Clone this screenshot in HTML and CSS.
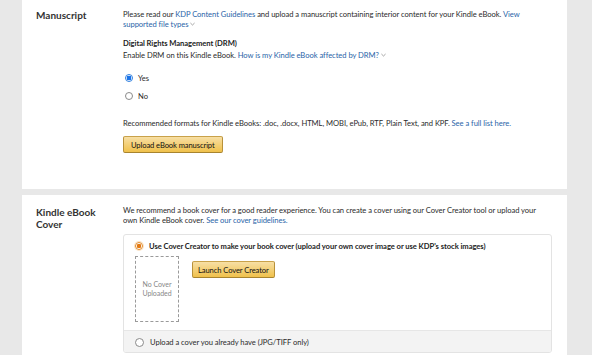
FILE: index.html
```html
<!DOCTYPE html>
<html>
<head>
<meta charset="utf-8">
<link rel="stylesheet" href="styles.css">
</head>
<body>
<div class="page">
  <section class="card card-top">
    <h2 class="label">Manuscript</h2>
    <div class="content">
      <p class="text">Please read our <a class="link">KDP Content Guidelines</a> and upload a manuscript containing interior content for your Kindle eBook. <a class="link">View supported file types</a> <svg class="chev" viewBox="0 0 6 4" width="5" height="4"><path d="M0.5 0.8 L3 3.2 L5.5 0.8" fill="none" stroke="#777" stroke-width="0.8"/></svg></p>
      <h3 class="subhead">Digital Rights Management (DRM)</h3>
      <p class="text">Enable DRM on this Kindle eBook. <a class="link">How is my Kindle eBook affected by DRM?</a> <svg class="chev" viewBox="0 0 6 4" width="5" height="4"><path d="M0.5 0.8 L3 3.2 L5.5 0.8" fill="none" stroke="#777" stroke-width="0.8"/></svg></p>
      <div class="radios">
        <label class="radio-row"><span class="radio radio-blue"></span>Yes</label>
        <label class="radio-row"><span class="radio"></span>No</label>
      </div>
      <p class="text formats">Recommended formats for Kindle eBooks: .doc, .docx, HTML, MOBI, ePub, RTF, Plain Text, and KPF. <a class="link">See a full list here.</a></p>
      <button class="btn">Upload eBook manuscript</button>
    </div>
  </section>
  <section class="card card-cover">
    <h2 class="label">Kindle eBook Cover</h2>
    <div class="content">
      <p class="text">We recommend a book cover for a good reader experience. You can create a cover using our Cover Creator tool or upload your own Kindle eBook cover. <a class="link">See our cover guidelines.</a></p>
      <div class="box">
        <div class="box-main">
          <label class="radio-row bold"><span class="radio radio-orange"></span>Use Cover Creator to make your book cover (upload your own cover image or use KDP's stock images)</label>
          <div class="creator">
            <div class="placeholder">No Cover Uploaded</div>
            <button class="btn btn-launch">Launch Cover Creator</button>
          </div>
        </div>
        <div class="box-alt">
          <label class="radio-row"><span class="radio radio-lg"></span>Upload a cover you already have (JPG/TIFF only)</label>
        </div>
      </div>
    </div>
  </section>
</div>
</body>
</html>
```

FILE: styles.css
```css
* { box-sizing: border-box; }
html, body {
  margin: 0;
  padding: 0;
  background: #e8e8e8;
  font-family: Lato, "Open Sans", sans-serif;
  color: #222;
}
.page {
  width: 592px;
  padding-left: 22px;
  display: flex;
  flex-direction: column;
  gap: 6px;
}
.card {
  width: 545px;
  background: #fff;
  display: grid;
  grid-template-columns: 87px 1fr;
  padding: 10px 16px 0 14px;
}
.card-top { height: 189px; }
.card-cover { padding-top: 11px; min-height: 170px; }
.label {
  margin: 0;
  font-size: 10px;
  line-height: 12px;
  font-weight: 700;
  color: #333;
}
.card-top .label { margin-top: -1px; }
.content { min-width: 0; letter-spacing: -0.05px; }
.text {
  margin: 0;
  font-size: 7.6px;
  line-height: 9.5px;
  color: #2b2b2b;
}
.link { color: #2a64a8; text-decoration: none; }
.chev { vertical-align: 1px; }
.subhead {
  margin: 9.5px 0 3px;
  font-size: 7.6px;
  line-height: 9.5px;
  font-weight: 700;
  color: #222;
}
.radios {
  margin-top: 11px;
  display: flex;
  flex-direction: column;
  gap: 6px;
}
.radio-row {
  display: flex;
  align-items: center;
  gap: 5px;
  font-size: 7.6px;
  line-height: 12px;
  height: 12px;
  color: #2b2b2b;
  padding-left: 2px;
}
.radio {
  width: 8px;
  height: 8px;
  border-radius: 50%;
  border: 1px solid #8a8a8a;
  background: #fff;
  flex: none;
}
.radio-blue {
  border-color: #2f7fe0;
  background: radial-gradient(circle, #1a73e8 0 2.2px, #fff 2.6px);
}
.radio-orange {
  border-color: #e08b2a;
  background: radial-gradient(circle, #e47911 0 2px, #fff 2.5px);
  box-shadow: 0 0 0 1px #fbe3c7;
}
.box .radio-row { padding-left: 0; gap: 6px; }
.radio-lg { width: 9px; height: 9px; }
.formats { margin-top: 17px; }
.btn {
  margin-top: 8px;
  height: 17px;
  padding: 0 7px;
  font-family: inherit;
  font-size: 7.6px;
  letter-spacing: -0.1px;
  color: #111;
  background: linear-gradient(#f7dfa5, #f0c14b);
  border: 1px solid;
  border-color: #c9a24a #b8913a #a8842f;
  border-radius: 2px;
  display: block;
}
.box {
  margin-top: 9px;
  border: 1px solid #e3e3e3;
  border-radius: 3px;
  width: 429px;
  overflow: hidden;
}
.box-main { padding: 5px 11px 8px 11px; }
.bold { font-weight: 700; color: #222; }
.creator {
  display: flex;
  align-items: flex-start;
  gap: 13px;
  margin-top: 4px;
}
.placeholder {
  width: 44px;
  height: 66px;
  border: 1px dashed #9a9a9a;
  display: flex;
  align-items: center;
  justify-content: center;
  text-align: center;
  font-size: 7px;
  line-height: 9px;
  color: #888;
  padding: 0 4px;
}
.btn-launch { margin-top: 5px; padding: 0 5px; }
.box-alt {
  background: #f3f3f3;
  border-top: 1px solid #e6e6e6;
  height: 22px;
  padding: 5px 11px 0;
}
```
